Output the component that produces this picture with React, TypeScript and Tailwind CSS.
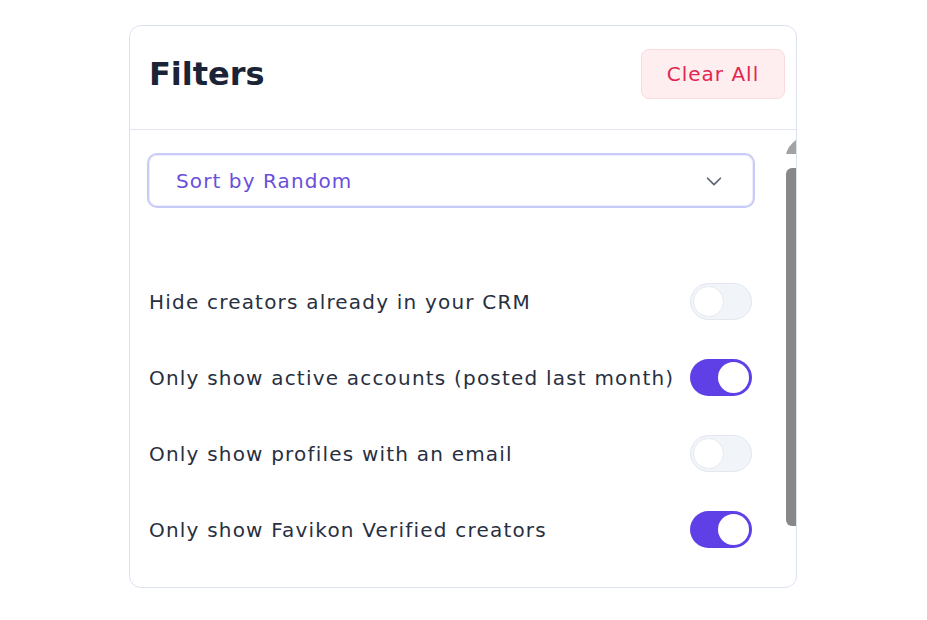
import React from "react"

const rows = [
    { label: "Hide creators already in your CRM", on: false },
    { label: "Only show active accounts (posted last month)", on: true },
    { label: "Only show profiles with an email", on: false },
    { label: "Only show Favikon Verified creators", on: true },
]

function Toggle({ on }: { on: boolean }) {
    return (
        <div
            className={
                on
                    ? "flex h-[37px] w-[62px] items-center justify-end rounded-full bg-[#5f3fe6] p-[3px]"
                    : "flex h-[37px] w-[62px] items-center justify-start rounded-full border border-[#e3e8f0] bg-[#f1f4f8] p-[2px]"
            }
        >
            <div
                className={
                    on
                        ? "h-[31px] w-[31px] rounded-full bg-white"
                        : "h-[31px] w-[31px] rounded-full border border-[#e6eaf0] bg-white"
                }
            />
        </div>
    )
}

export default function App() {
    return (
        <div className="min-h-screen bg-white pt-[25px] pl-[129px]" style={{ fontFamily: "'DejaVu Sans', 'Noto Sans', sans-serif" }}>
            <div className="flex h-[563px] w-[668px] flex-col rounded-xl border border-[#dce2f1] bg-white">
                {/* Header */}
                <div className="flex h-[104px] items-start justify-between border-b border-[#e2e7f1] pl-[19px] pr-[11px] pt-[23px]">
                    <h1 className="mt-[3px] text-[32px] font-bold leading-[44px] text-[#1b2336]">Filters</h1>
                    <button className="h-[50px] w-[144px] rounded-lg border border-[#fbdadf] bg-[#ffeef0] text-[20px] tracking-[1px] text-[#e3264f]">
                        Clear All
                    </button>
                </div>

                {/* Body */}
                <div className="flex flex-1">
                    <div className="flex-1 pl-[17px] pr-[34px] pt-[23px]">
                        <div className="-mr-[3px] flex h-[55px] items-center justify-between rounded-[10px] border-2 border-[#c9cbf7] pl-[27px] pr-[28px] shadow-[inset_0_0_0_1px_#eceefd]">
                            <span className="text-[20px] tracking-[1.1px] text-[#6b4fdc]">Sort by Random</span>
                            <svg width="22" height="22" viewBox="0 0 24 24" fill="none" stroke="#5b6475" strokeWidth="1.8" strokeLinecap="round" strokeLinejoin="round">
                                <path d="M5 9l7 7 7-7" />
                            </svg>
                        </div>

                        <div className="mt-[75px] flex flex-col gap-[39px] pl-[2px]">
                            {rows.map((r) => (
                                <div key={r.label} className="flex h-[37px] items-center justify-between">
                                    <span className="text-[20px] tracking-[1.2px] text-[#28303f]">{r.label}</span>
                                    <Toggle on={r.on} />
                                </div>
                            ))}
                        </div>
                    </div>

                    {/* Scrollbar */}
                    <div className="flex w-[10px] flex-col items-end pt-[10px]">
                        <svg width="10" height="14" viewBox="0 0 10 14">
                            <path d="M10 0 L10 14 L0 14 Q2 6 10 0 Z" fill="#a3a3a3" />
                        </svg>
                        <div className="mt-[14px] h-[358px] w-[10px] rounded-l-[6px] bg-[#888888]" />
                    </div>
                </div>
            </div>
        </div>
    )
}
